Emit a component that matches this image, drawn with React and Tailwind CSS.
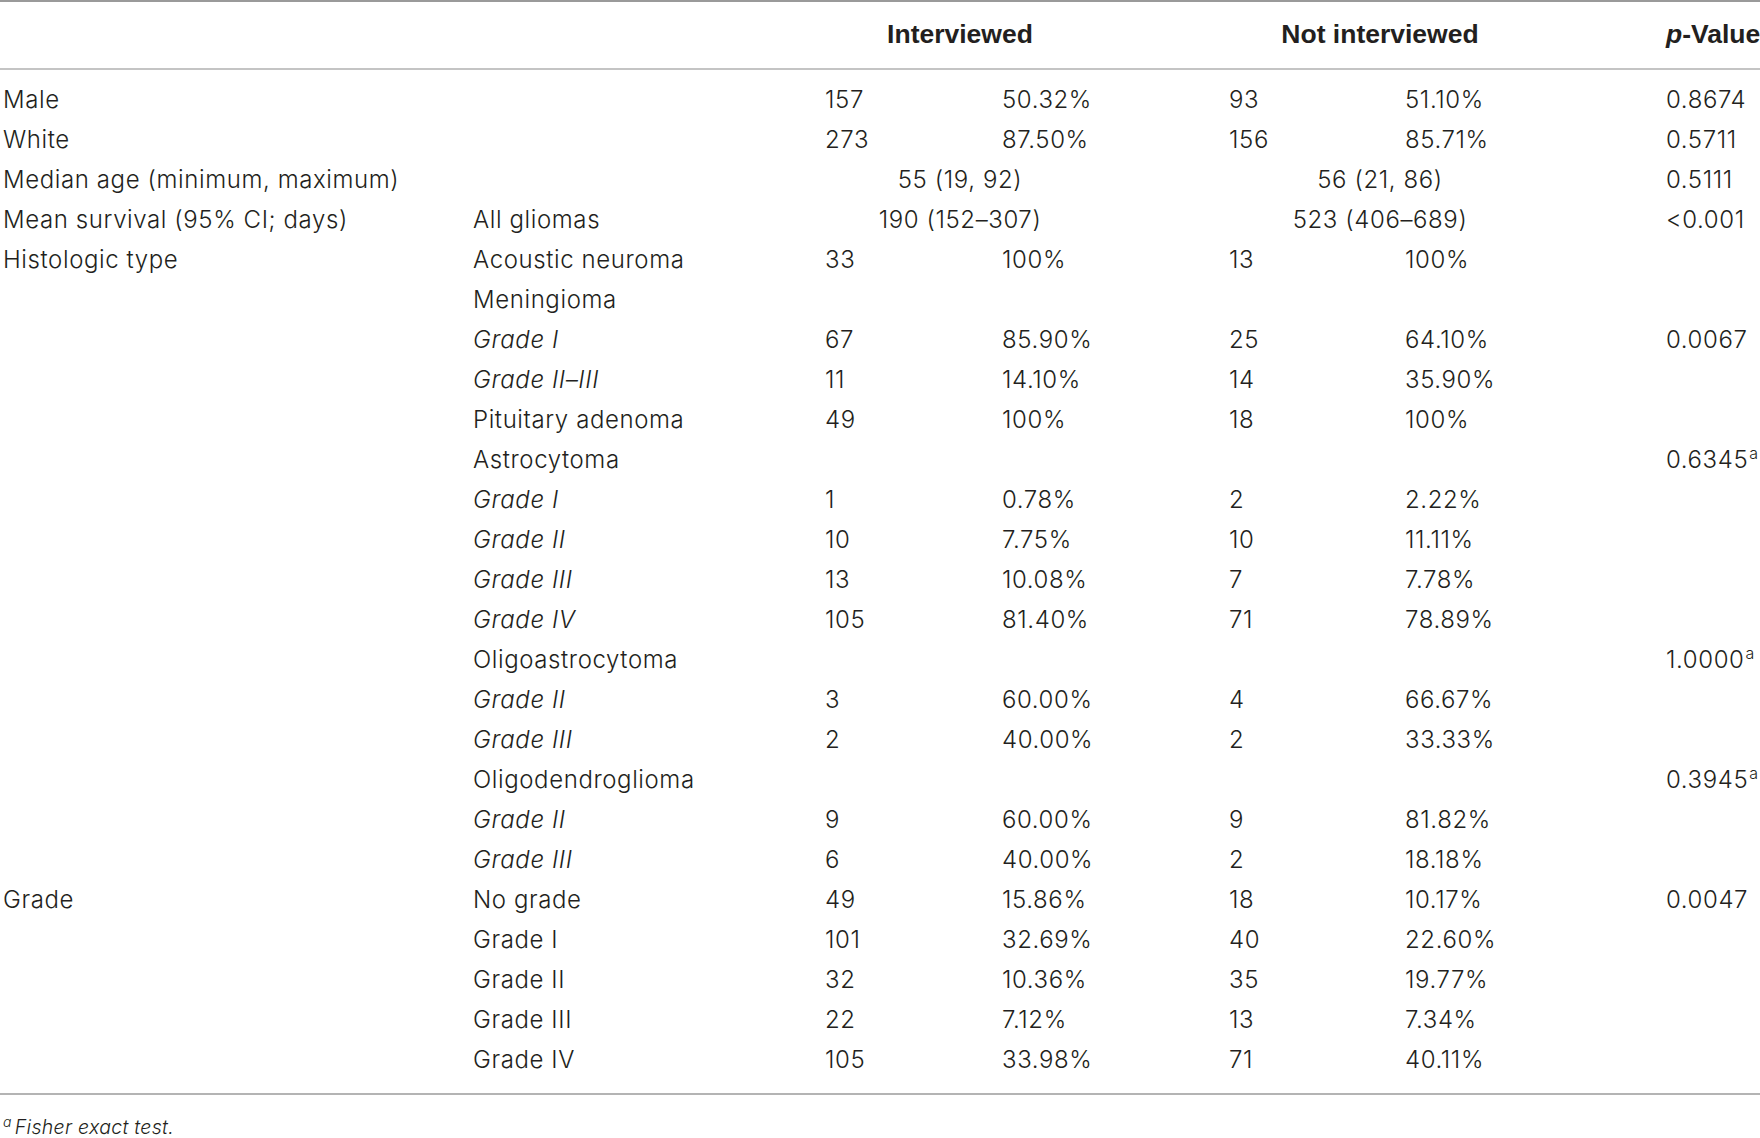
const ROWS = [
  { a: "Male", n1: "157", p1: "50.32%", n2: "93", p2: "51.10%", pv: "0.8674" },
  { a: "White", n1: "273", p1: "87.50%", n2: "156", p2: "85.71%", pv: "0.5711" },
  { a: "Median age (minimum, maximum)", m1: "55 (19, 92)", m2: "56 (21, 86)", pv: "0.5111" },
  { a: "Mean survival (95% CI; days)", b: "All gliomas", m1: "190 (152–307)", m2: "523 (406–689)", pv: "<0.001" },
  { a: "Histologic type", b: "Acoustic neuroma", n1: "33", p1: "100%", n2: "13", p2: "100%" },
  { b: "Meningioma" },
  { b: "Grade I", it: true, n1: "67", p1: "85.90%", n2: "25", p2: "64.10%", pv: "0.0067" },
  { b: "Grade II–III", it: true, n1: "11", p1: "14.10%", n2: "14", p2: "35.90%" },
  { b: "Pituitary adenoma", n1: "49", p1: "100%", n2: "18", p2: "100%" },
  { b: "Astrocytoma", pv: "0.6345", sup: true },
  { b: "Grade I", it: true, n1: "1", p1: "0.78%", n2: "2", p2: "2.22%" },
  { b: "Grade II", it: true, n1: "10", p1: "7.75%", n2: "10", p2: "11.11%" },
  { b: "Grade III", it: true, n1: "13", p1: "10.08%", n2: "7", p2: "7.78%" },
  { b: "Grade IV", it: true, n1: "105", p1: "81.40%", n2: "71", p2: "78.89%" },
  { b: "Oligoastrocytoma", pv: "1.0000", sup: true },
  { b: "Grade II", it: true, n1: "3", p1: "60.00%", n2: "4", p2: "66.67%" },
  { b: "Grade III", it: true, n1: "2", p1: "40.00%", n2: "2", p2: "33.33%" },
  { b: "Oligodendroglioma", pv: "0.3945", sup: true },
  { b: "Grade II", it: true, n1: "9", p1: "60.00%", n2: "9", p2: "81.82%" },
  { b: "Grade III", it: true, n1: "6", p1: "40.00%", n2: "2", p2: "18.18%" },
  { a: "Grade", b: "No grade", n1: "49", p1: "15.86%", n2: "18", p2: "10.17%", pv: "0.0047" },
  { b: "Grade I", n1: "101", p1: "32.69%", n2: "40", p2: "22.60%" },
  { b: "Grade II", n1: "32", p1: "10.36%", n2: "35", p2: "19.77%" },
  { b: "Grade III", n1: "22", p1: "7.12%", n2: "13", p2: "7.34%" },
  { b: "Grade IV", n1: "105", p1: "33.98%", n2: "71", p2: "40.11%" },
];

const GRID = "grid grid-cols-[470px_352px_177px_227px_176px_261px_1fr] pl-[3px]";

export default function App() {
  return (
    <div className="w-[1760px] h-[1138px] overflow-hidden bg-white text-[#231f20] font-['Inter','Liberation_Sans',sans-serif] font-light text-[24px] tracking-[0.6px] whitespace-nowrap">
      <div className={`${GRID} h-[70px] items-center border-t-2 border-b-2 border-t-[#9a9a9a] border-b-[#c4c4c4] font-['Liberation_Sans',sans-serif] font-bold text-[26.5px] tracking-normal`}>
        <div />
        <div />
        <div className="col-span-2 text-center pr-[134px]">Interviewed</div>
        <div className="col-span-2 text-center pr-[135px]">Not interviewed</div>
        <div>
          <i>p</i>-Value
        </div>
      </div>

      <div className="pt-[10px] pb-[13px] border-b-2 border-[#b4b4b4]">
        {ROWS.map((r, i) => (
          <div key={i} className={`${GRID} h-[40px] items-center`}>
            <div>{r.a}</div>
            <div className={r.it ? "italic" : ""}>{r.b}</div>
            {r.m1 ? (
              <div className="col-span-2 text-center pr-[134px]">{r.m1}</div>
            ) : (
              <>
                <div>{r.n1}</div>
                <div>{r.p1}</div>
              </>
            )}
            {r.m2 ? (
              <div className="col-span-2 text-center pr-[135px]">{r.m2}</div>
            ) : (
              <>
                <div>{r.n2}</div>
                <div>{r.p2}</div>
              </>
            )}
            <div>
              {r.pv}
              {r.sup && <sup className="text-[16px] -top-[9px] ml-[1px] tracking-normal">a</sup>}
            </div>
          </div>
        ))}
      </div>

      <div className="pl-[3px] mt-[21px] text-[19.5px] italic leading-[22px] tracking-[0.3px]">
        <sup className="text-[14px] -top-[7px] mr-[3px]">a</sup>Fisher exact test.
      </div>
    </div>
  );
}
